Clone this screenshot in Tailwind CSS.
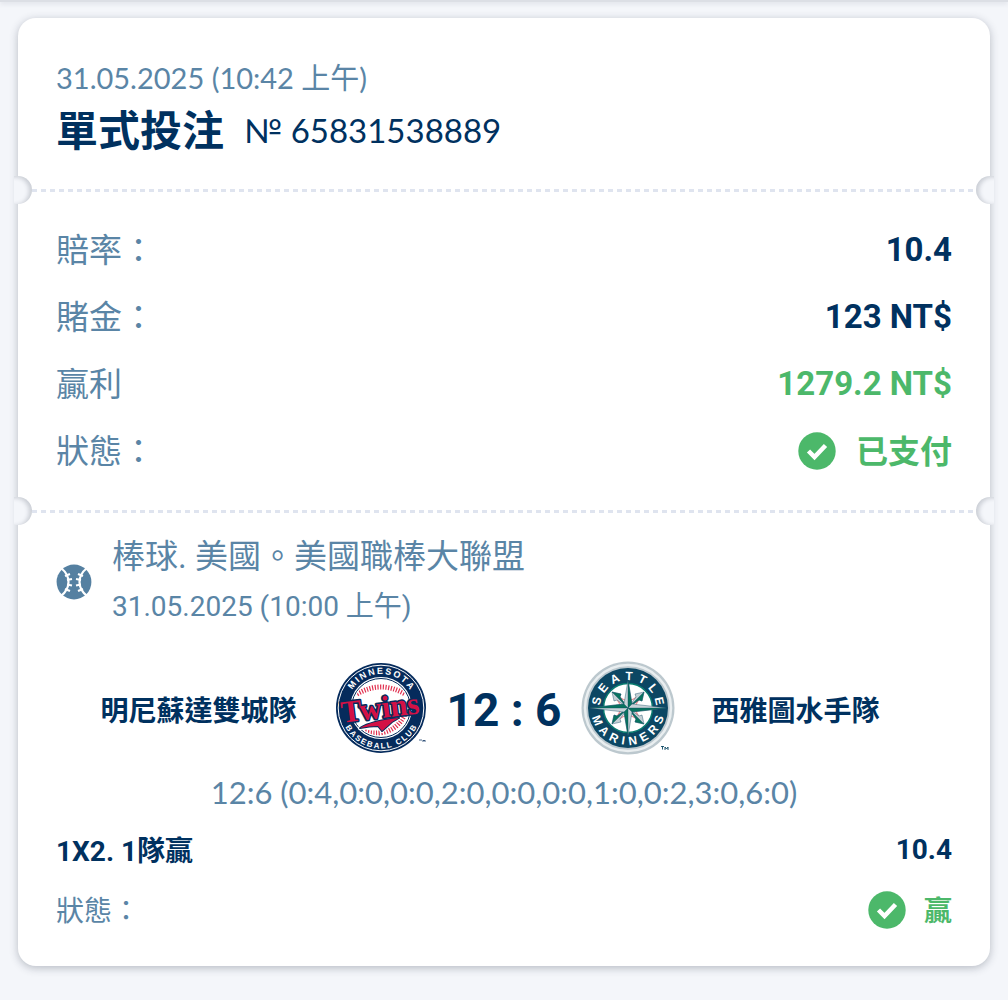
<!DOCTYPE html>
<html lang="zh-Hant">
<head>
<meta charset="utf-8">
<meta name="viewport" content="width=device-width, initial-scale=1">
<title>單式投注</title>
<script src="https://cdn.jsdelivr.net/npm/@tailwindcss/browser@4"></script>
</head>
<body class="min-h-screen bg-[#f4f6fa] font-['Roboto','Noto_Sans_CJK_TC',sans-serif] text-[#5a85a6]">
<header class="h-[2px] bg-[#dcdfe5] shadow-[0_1px_5px_rgba(60,70,90,0.22)]"></header>
<main class="px-[18px] pt-4 pb-8">
  <article class="rounded-[18px] bg-white shadow-[0_2px_8px_rgba(40,50,70,0.3)]">
    <section class="px-[38px] pt-[42px] pb-5">
      <p class="font-['Lato','Noto_Sans_CJK_TC',sans-serif] text-[29px] leading-9">31.05.2025 (10:42 上午)</p>
      <h1 class="mt-2 flex items-center gap-5 text-[#00315f]">
        <span class="pt-1 text-[42px] font-bold leading-[48px]">單式投注</span>
        <span class="font-['Lato',sans-serif] text-[33px] font-normal leading-[52px]">№ 65831538889</span>
      </h1>
    </section>

    <div class="-mx-[4px] flex h-7 items-center overflow-hidden">
      <span class="-ml-[6px] h-7 w-6 rounded-r-full bg-[#f4f6fa] shadow-[inset_-3px_1px_4px_rgba(40,50,70,0.2)]"></span>
      <span class="h-[3px] flex-1 bg-[repeating-linear-gradient(90deg,#dfe4ef_0_5px,transparent_5px_9px)]"></span>
      <span class="-mr-[6px] h-7 w-6 rounded-l-full bg-[#f4f6fa] shadow-[inset_3px_1px_4px_rgba(40,50,70,0.2)]"></span>
    </div>

    <dl class="px-[38px] pt-3 pb-[13px] text-[33px] leading-[67px]">
      <div class="flex justify-between"><dt class="pt-[2px] leading-[65px]">賠率：</dt><dd class="font-bold text-[#00315f]">10.4</dd></div>
      <div class="flex justify-between"><dt class="pt-[2px] leading-[65px]">賭金：</dt><dd class="font-bold text-[#00315f]">123 NT$</dd></div>
      <div class="flex justify-between"><dt class="pt-[2px] leading-[65px]">贏利</dt><dd class="font-bold text-[#4cb86a]">1279.2 NT$</dd></div>
      <div class="flex justify-between"><dt class="pt-[2px] leading-[65px]">狀態：</dt>
        <dd class="flex items-center gap-5 font-bold text-[#4cb86a]">
          <svg class="size-[38px]" viewBox="0 0 38 38" aria-hidden="true"><circle cx="19" cy="19" r="18.700" fill="#4cb86a"/><path d="M10.500 19l6 6L27.500 13.500" fill="none" stroke="#fff" stroke-width="4.500"/></svg>
          <span class="pt-1 text-[32px] leading-[63px]">已支付</span></dd></div>
    </dl>

    <div class="-mx-[4px] flex h-7 items-center overflow-hidden">
      <span class="-ml-[6px] h-7 w-6 rounded-r-full bg-[#f4f6fa] shadow-[inset_-3px_1px_4px_rgba(40,50,70,0.2)]"></span>
      <span class="h-[3px] flex-1 bg-[repeating-linear-gradient(90deg,#dfe4ef_0_5px,transparent_5px_9px)]"></span>
      <span class="-mr-[6px] h-7 w-6 rounded-l-full bg-[#f4f6fa] shadow-[inset_3px_1px_4px_rgba(40,50,70,0.2)]"></span>
    </div>

    <section class="px-[38px] pt-[7px] pb-[26px]">
      <div class="flex items-center gap-5">
        <svg class="size-9 shrink-0" viewBox="0 0 36 36" aria-hidden="true">
          <circle cx="18" cy="18" r="17.400" fill="#5580a1"/>
          <g fill="none" stroke="#fff" stroke-width="2.200">
            <path d="M5 4C15 12 15 24 5 32M31 4C21 12 21 24 31 32"/>
            <path d="M9 12l5-2M11 16l5-1M11 20.500l5 1M9 25l5 2M27 12l-5-2M25 16l-5-1M25 20.500l-5 1M27 25l-5 2"/>
          </g>
        </svg>
        <div class="leading-[50px]">
          <h2 class="text-[33px]">棒球. 美國。美國職棒大聯盟</h2>
          <p class="text-[28px]">31.05.2025 (10:00 上午)</p>
        </div>
      </div>

      <div class="mt-7 grid grid-cols-[1fr_auto_1fr] items-center gap-x-[38px] text-[#00315f]">
        <span class="pt-2 text-right text-[28px] font-bold">明尼蘇達雙城隊</span>
        <div class="flex items-center gap-5">
          <svg class="size-24 -mx-[2px]" viewBox="0 0 96 96" role="img" aria-label="Minnesota Twins">
            <defs>
              <path id="tw-top" d="M14 48a34 34 0 0 1 68 0"/>
              <path id="tw-bottom" d="M7.500 48a40.500 40.500 0 0 0 81 0"/>
              <clipPath id="tw-ball"><circle cx="48" cy="48" r="28"/></clipPath>
            </defs>
            <circle cx="48" cy="48" r="45" fill="#052b5c"/>
            <circle cx="48" cy="48" r="42.800" fill="none" stroke="#fff" stroke-width="1"/>
            <circle cx="48" cy="48" r="31" fill="#fff"/>
            <circle cx="48" cy="48" r="29.500" fill="#fff" stroke="#052b5c" stroke-width="1"/>
            <g clip-path="url(#tw-ball)" fill="none" stroke="#e0304f">
              <path d="M24 34Q48 20 72 34" stroke-width="5" stroke-dasharray="1.200 1.500"/>
              <path d="M32 72Q62 78 73 52" stroke-width="5" stroke-dasharray="1.200 1.500"/>
            </g>
            <g fill="#fff" font-family="Liberation Sans" font-weight="700" text-anchor="middle">
              <text font-size="9"><textPath href="#tw-top" startOffset="50%">M&#8201;I&#8201;N&#8201;N&#8201;E&#8201;S&#8201;O&#8201;T&#8201;A</textPath></text>
              <text font-size="8"><textPath href="#tw-bottom" startOffset="50%">B&#8201;A&#8201;S&#8201;E&#8201;B&#8201;A&#8201;L&#8201;L&#8201; &#8201;C&#8201;L&#8201;U&#8201;B</textPath></text>
            </g>
            <g stroke-linejoin="round">
              <path d="M27 68Q38 61 66 58L59 62L49 71L45 66Q37 66 27 68Z" fill="#d31145" stroke="#fff" stroke-width="4"/>
              <path d="M27 68Q38 61 66 58L59 62L49 71L45 66Q37 66 27 68Z" fill="#d31145" stroke="#052b5c" stroke-width="2" paint-order="stroke"/>
            </g>
            <g transform="rotate(-7 48 48)" font-family="Liberation Serif" font-weight="700" font-size="31" text-anchor="middle" stroke-linejoin="round">
              <text x="47" y="58" fill="#d31145" stroke="#052b5c" stroke-width="3" paint-order="stroke">Twins</text>
            </g>
            <path d="M86 80h3M90 82v-2l1 1l1-1v2" stroke="#052b5c" stroke-width=".7" fill="none"/>
          </svg>
          <span class="whitespace-nowrap pt-1 text-[46px] font-bold leading-none">12 : 6</span>
          <svg class="size-24 -mx-[2px]" viewBox="0 0 96 96" role="img" aria-label="Seattle Mariners">
            <defs>
              <path id="ma-top" d="M20 48a28 28 0 0 1 56 0"/>
              <path id="ma-bottom" d="M11 48a37 37 0 0 0 74 0"/>
            </defs>
            <circle cx="48" cy="48" r="46.500" fill="#bcc8ce"/>
            <circle cx="48" cy="48" r="43" fill="none" stroke="#e9eef0" stroke-width="2.500"/>
            <circle cx="48" cy="48" r="40" fill="#0c4763"/>
            <circle cx="48" cy="48" r="24.500" fill="#fff" stroke="#087b6f" stroke-width="1.500"/>
            <g fill="#fff" font-family="Liberation Sans Narrow, Liberation Sans" font-weight="700" text-anchor="middle">
              <text font-size="12"><textPath href="#ma-top" startOffset="50%">S&#8201;&#8201;E&#8201;&#8201;A&#8201;&#8201;T&#8201;&#8201;T&#8201;&#8201;L&#8201;&#8201;E</textPath></text>
              <text font-size="12"><textPath href="#ma-bottom" startOffset="50%">M&#8201;&#8201;A&#8201;&#8201;R&#8201;&#8201;I&#8201;&#8201;N&#8201;&#8201;E&#8201;&#8201;R&#8201;&#8201;S</textPath></text>
            </g>
            <path d="M39 37Q48 44 57 37M39 59Q48 52 57 59M37 39Q44 48 37 57M59 39Q52 48 59 57" fill="none" stroke="#ef9a9d" stroke-width="1.500"/>
            <g stroke="#0c4763" stroke-width=".4">
              <path d="M32 32L41 34L40 37L48 48L37 40L34 41ZM64 32L62 41L59 40L48 48L56 37L55 34ZM64 64L55 62L56 59L48 48L59 56L62 55ZM32 64L34 55L37 56L48 48L40 59L41 62Z" fill="#c3cfd4"/>
              <path d="M32 32L41 34L40 37L48 48ZM64 32L62 41L59 40L48 48ZM64 64L55 62L56 59L48 48ZM32 64L34 55L37 56L48 48Z" fill="#08735f"/>
              <path d="M48 20L52 44L87 48L52 52L48 76L44 52L9 48L44 44Z" fill="#c8d3d8"/>
              <path d="M48 20L52 44L48 48ZM87 48L52 52L48 48ZM48 76L44 52L48 48ZM9 48L44 44L48 48Z" fill="#08735f"/>
            </g>
            <path d="M81 86.500h3M82.500 86.500v3M85 90v-3l1.500 2l1.500-2v3" stroke="#0c4763" stroke-width=".9" fill="none"/>
          </svg>
        </div>
        <span class="pt-2 text-[28px] font-bold">西雅圖水手隊</span>
      </div>

      <p class="mt-4 text-center font-['Lato',sans-serif] text-[31px] leading-10">12:6 (0:4,0:0,0:0,2:0,0:0,0:0,1:0,0:2,3:0,6:0)</p>

      <dl class="mt-2 text-[28px] leading-[60px]">
        <div class="flex justify-between font-bold text-[#00315f]"><dt class="pt-1 leading-[56px]">1X2. 1隊贏</dt><dd>10.4</dd></div>
        <div class="flex justify-between"><dt class="pt-1 leading-[56px]">狀態：</dt>
          <dd class="flex items-center gap-[18px] font-bold text-[#4cb86a]">
            <svg class="size-[38px]" viewBox="0 0 38 38" aria-hidden="true"><circle cx="19" cy="19" r="18.700" fill="#4cb86a"/><path d="M10.500 19l6 6L27.500 13.500" fill="none" stroke="#fff" stroke-width="4.500"/></svg>
            <span class="pt-1 leading-[56px]">贏</span></dd></div>
      </dl>
    </section>
  </article>
</main>
</body>
</html>
